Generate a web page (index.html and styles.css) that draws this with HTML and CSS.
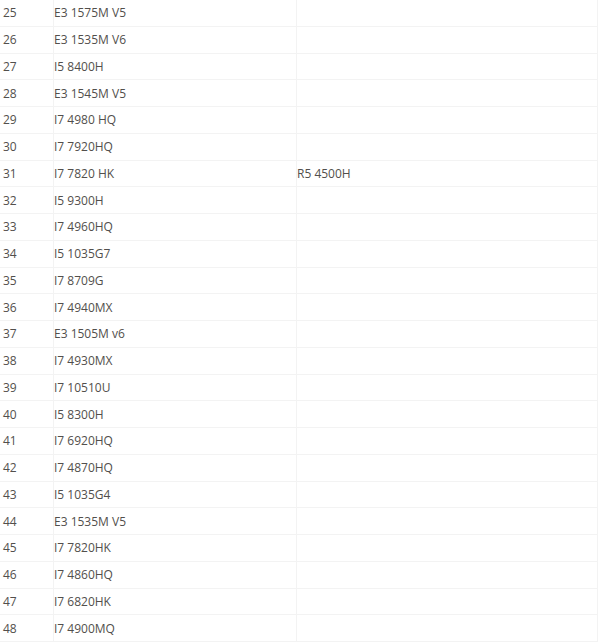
FILE: index.html
```html
<!DOCTYPE html>
<html>
<head>
<meta charset="utf-8">
<link rel="stylesheet" href="styles.css">
</head>
<body>
<div class="table">
  <div class="row"><div class="c num">25</div><div class="c name">E3 1575M V5</div><div class="c alt"></div></div>
  <div class="row"><div class="c num">26</div><div class="c name">E3 1535M V6</div><div class="c alt"></div></div>
  <div class="row"><div class="c num">27</div><div class="c name">I5 8400H</div><div class="c alt"></div></div>
  <div class="row"><div class="c num">28</div><div class="c name">E3 1545M V5</div><div class="c alt"></div></div>
  <div class="row"><div class="c num">29</div><div class="c name">I7 4980 HQ</div><div class="c alt"></div></div>
  <div class="row"><div class="c num">30</div><div class="c name">I7 7920HQ</div><div class="c alt"></div></div>
  <div class="row"><div class="c num">31</div><div class="c name">I7 7820 HK</div><div class="c alt">R5 4500H</div></div>
  <div class="row"><div class="c num">32</div><div class="c name">I5 9300H</div><div class="c alt"></div></div>
  <div class="row"><div class="c num">33</div><div class="c name">I7 4960HQ</div><div class="c alt"></div></div>
  <div class="row"><div class="c num">34</div><div class="c name">I5 1035G7</div><div class="c alt"></div></div>
  <div class="row"><div class="c num">35</div><div class="c name">I7 8709G</div><div class="c alt"></div></div>
  <div class="row"><div class="c num">36</div><div class="c name">I7 4940MX</div><div class="c alt"></div></div>
  <div class="row"><div class="c num">37</div><div class="c name">E3 1505M v6</div><div class="c alt"></div></div>
  <div class="row"><div class="c num">38</div><div class="c name">I7 4930MX</div><div class="c alt"></div></div>
  <div class="row"><div class="c num">39</div><div class="c name">I7 10510U</div><div class="c alt"></div></div>
  <div class="row"><div class="c num">40</div><div class="c name">I5 8300H</div><div class="c alt"></div></div>
  <div class="row"><div class="c num">41</div><div class="c name">I7 6920HQ</div><div class="c alt"></div></div>
  <div class="row"><div class="c num">42</div><div class="c name">I7 4870HQ</div><div class="c alt"></div></div>
  <div class="row"><div class="c num">43</div><div class="c name">I5 1035G4</div><div class="c alt"></div></div>
  <div class="row"><div class="c num">44</div><div class="c name">E3 1535M V5</div><div class="c alt"></div></div>
  <div class="row"><div class="c num">45</div><div class="c name">I7 7820HK</div><div class="c alt"></div></div>
  <div class="row"><div class="c num">46</div><div class="c name">I7 4860HQ</div><div class="c alt"></div></div>
  <div class="row"><div class="c num">47</div><div class="c name">I7 6820HK</div><div class="c alt"></div></div>
  <div class="row"><div class="c num">48</div><div class="c name">I7 4900MQ</div><div class="c alt"></div></div>
</div>
</body>
</html>
```
FILE: styles.css
```css
html, body {
  margin: 0;
  padding: 0;
  background: #fff;
}
body {
  font-family: "Open Sans", "Noto Sans", sans-serif;
  font-size: 12px;
  color: #524f4c;
  overflow: hidden;
}
.table {
  width: 598px;
  border-right: 1px solid #f3f3f3;
  box-sizing: border-box;
}
.row {
  display: flex;
  height: 26.75px;
  box-sizing: border-box;
  border-bottom: 1px solid #f3f3f3;
}
.c {
  display: flex;
  align-items: center;
  box-sizing: border-box;
}
.num {
  width: 53px;
  padding-left: 3px;
}
.name {
  width: 243px;
  border-left: 1px solid #f3f3f3;
  padding-left: 0;
}
.alt {
  flex: 1;
  border-left: 1px solid #f3f3f3;
  padding-left: 0;
}
```
